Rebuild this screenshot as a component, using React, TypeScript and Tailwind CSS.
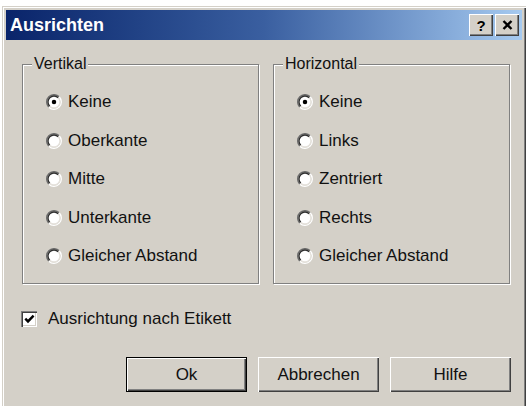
import React from "react";

const FONT = { fontFamily: '"Liberation Sans", Arial, sans-serif' };

function Radio({ checked }: { checked?: boolean }) {
  return (
    <svg width="16" height="16" viewBox="0 0 12 12" className="shrink-0">
      <circle cx="6" cy="6" r="4.5" fill="#ffffff" />
      <path d="M2.111 9.889 A5.5 5.5 0 0 1 9.889 2.111" fill="none" stroke="#6e6e6e" strokeWidth="1.1" />
      <path d="M2.818 9.182 A4.5 4.5 0 0 1 9.182 2.818" fill="none" stroke="#303030" strokeWidth="1" />
      <path d="M9.889 2.111 A5.5 5.5 0 0 1 2.111 9.889" fill="none" stroke="#ffffff" strokeWidth="1" />
      <path d="M9.182 2.818 A4.5 4.5 0 0 1 2.818 9.182" fill="none" stroke="#e4e1db" strokeWidth="1" />
      {checked && <circle cx="6" cy="6" r="1.7" fill="#000000" />}
    </svg>
  );
}

function RadioRow({ label, checked }: { label: string; checked?: boolean }) {
  return (
    <div className="flex h-[38.5px] items-center gap-[6px]">
      <Radio checked={checked} />
      <span className="text-[17px] leading-[18px] text-[#111]">{label}</span>
    </div>
  );
}

function Group({ title, items }: { title: string; items: string[] }) {
  return (
    <fieldset className="h-[229px] w-[237px] border border-[#808080] shadow-[inset_1px_1px_#ffffff,1px_1px_#ffffff]">
      <legend className="ml-[9px] bg-[#d4d0c8] px-[2px] text-[16px] leading-[18px] text-[#111]">{title}</legend>
      <div className="flex flex-col pl-[23px] pt-[10px]">
        {items.map((it, i) => (
          <RadioRow key={it} label={it} checked={i === 0} />
        ))}
      </div>
    </fieldset>
  );
}

function Button({ label, isDefault }: { label: string; isDefault?: boolean }) {
  return (
    <div
      className={
        isDefault
          ? "flex h-[35px] w-[121px] items-center justify-center border border-black bg-[#d4d0c8] shadow-[inset_1px_1px_#ffffff,inset_-1px_-1px_#404040,inset_-2px_-2px_#808080] text-[17px] text-[#111]"
          : "flex h-[35px] w-[121px] items-center justify-center bg-[#d4d0c8] shadow-[inset_1px_1px_#ffffff,inset_-1px_-1px_#404040,inset_-2px_-2px_#808080] text-[17px] text-[#111]"
      }
    >
      {label}
    </div>
  );
}

export default function App() {
  return (
    <div className="h-[406px] w-[528px] overflow-hidden bg-white pl-[2px] pt-[6px]" style={FONT}>
      <div className="flex h-[403px] w-[524px] flex-col bg-[#d4d0c8] p-[4px] shadow-[inset_1px_1px_#d4d0c8,inset_2px_2px_#ffffff,inset_-1px_-1px_#404040,inset_-2px_-2px_#808080]">
        {/* Title bar */}
        <div className="flex h-[30px] items-center justify-between bg-gradient-to-r from-[#0a246a] via-[#3a5fa0] to-[#a6caf0] pl-[4px] pr-[3px]">
          <span className="text-[18px] font-bold leading-[20px] text-white">Ausrichten</span>
          <div className="flex gap-[2px]">
            <div className="flex h-[22px] w-[24px] items-center justify-center bg-[#d4d0c8] shadow-[inset_1px_1px_#ffffff,inset_-1px_-1px_#404040,inset_-2px_-2px_#808080] text-[15px] font-bold leading-none text-black">
              ?
            </div>
            <div className="flex h-[22px] w-[24px] items-center justify-center bg-[#d4d0c8] shadow-[inset_1px_1px_#ffffff,inset_-1px_-1px_#404040,inset_-2px_-2px_#808080]">
              <svg width="11" height="10" viewBox="0 0 11 10">
                <path d="M1.5 1 L9.5 9 M9.5 1 L1.5 9" stroke="#000" strokeWidth="2.4" />
              </svg>
            </div>
          </div>
        </div>

        {/* Body */}
        <div className="flex flex-col pl-[16px] pt-[15px]">
          <div className="flex gap-[14px]">
            <Group title="Vertikal" items={["Keine", "Oberkante", "Mitte", "Unterkante", "Gleicher Abstand"]} />
            <Group title="Horizontal" items={["Keine", "Links", "Zentriert", "Rechts", "Gleicher Abstand"]} />
          </div>

          <div className="-ml-[1px] mt-[26px] flex h-[18px] items-center gap-[11px]">
            <div className="flex h-[16px] w-[16px] items-center justify-center bg-white shadow-[inset_1px_1px_#808080,inset_2px_2px_#404040,inset_-1px_-1px_#ffffff,inset_-2px_-2px_#d4d0c8]">
              <svg width="11" height="10" viewBox="0 0 11 10">
                <path d="M1.3 4.6 L4 7.4 L9.6 1.6" fill="none" stroke="#000" strokeWidth="2.4" />
              </svg>
            </div>
            <span className="text-[17px] leading-[18px] text-[#111]">Ausrichtung nach Etikett</span>
          </div>

          <div className="mt-[29px] flex justify-end gap-[11px] pr-[11px]">
            <Button label="Ok" isDefault />
            <Button label="Abbrechen" />
            <Button label="Hilfe" />
          </div>
        </div>
      </div>
    </div>
  );
}
